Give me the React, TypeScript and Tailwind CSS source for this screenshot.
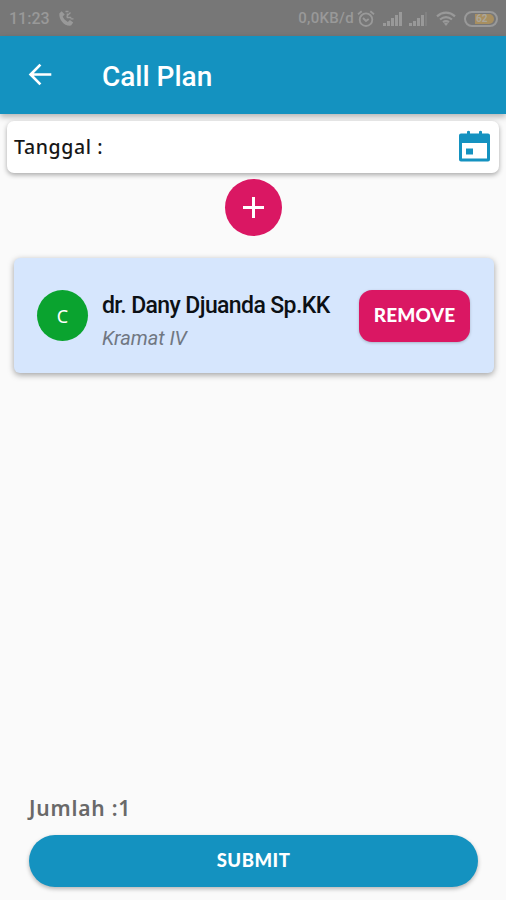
function StatusBar() {
  return (
    <div className="flex h-9 items-center bg-[#777777] pl-[9px] pr-[8px] pt-[1px] font-['Roboto',sans-serif] text-[#999999]">
      <span className="w-[41px] whitespace-nowrap text-[16px] font-medium">11:23</span>
      <svg className="ml-[8px] h-[18px] w-[17px]" viewBox="0 0 17 18" fill="none" stroke="currentColor">
        <path d="M1.3 3.4 3.7 1.2l3 3.2-2 2.2c1.1 2.4 2.8 4.2 5.1 5.3l2.1-2 3.3 2.7-2.1 3C6.3 16.5.9 9.6 1.3 3.4Z" fill="currentColor" stroke="none" />
        <path d="m12.5 2.5-4 4M9.3 3.5v4h4M7.5 1.5h3M12.5 8.8h3" strokeWidth="1.3" />
      </svg>
      <span className="ml-auto whitespace-nowrap text-[15px] font-medium tracking-[0.3px]">0,0KB/d</span>
      <svg className="ml-[3px] h-[18px] w-[18px]" viewBox="0 0 18 18" fill="none" stroke="currentColor" strokeWidth="1.8">
        <circle cx="9" cy="9.7" r="6.3" />
        <path d="m1 4.3 3.7-3M17 4.3l-3.7-3M6 8l3 3 2.7-2" />
      </svg>
      <svg className="ml-[8px] h-[18px] w-[20px]" viewBox="0 0 20 18" fill="currentColor">
        <path d="M0 13h3v3H0zM4 11h3v5H4zM8 8h3v8H8zM12 5h3v11h-3zM16 2h3v14h-3z" />
      </svg>
      <svg className="ml-[6px] h-[18px] w-[20px]" viewBox="0 0 20 18" fill="currentColor">
        <path d="M0 13h3v3H0zM4 11h3v5H4zM8 8h3v8H8zM12 5h3v11h-3z" />
        <path d="M16 2h2v14h-2z" opacity=".3" />
      </svg>
      <svg className="ml-[7px] h-[16px] w-[20px]" viewBox="0 0 20 16" fill="none" stroke="currentColor" strokeWidth="2.2">
        <path d="M1 5.3c5.5-4.8 12.5-4.8 18 0M4 8.5c4-3.3 8-3.3 12 0M7 11.2c2-1.5 4-1.5 6 0" />
        <path d="m8 12.5 2 2.5 2-2.5c-1.2-1-2.8-1-4 0Z" fill="currentColor" stroke="none" />
      </svg>
      <div className="ml-[8px] flex h-[16px] w-[34px] items-center rounded-full border-[2px] border-[#999999] pl-[9px] pr-[2px]">
        <div className="flex h-[10px] w-full items-center rounded-r-full bg-[#a88f60] pl-[1px] text-[10px] leading-none font-bold text-[#aaa69b]">62</div>
      </div>
    </div>
  );
}

function Header() {
  return (
    <header className="flex h-[78px] items-center bg-[#1492c0] pl-[28px] text-white shadow-[0_3px_6px_rgba(0,0,0,0.28)]">
      <svg className="h-[24px] w-[24px]" viewBox="0 0 24 24" fill="none" stroke="currentColor" strokeWidth="2.7">
        <path d="M12.4 1.6 2.6 11.5l9.8 9.9M2.5 11.5h20.8" />
      </svg>
      <h1 className="ml-[50px] mt-[4px] whitespace-nowrap font-['Roboto',sans-serif] text-[28px] leading-[34px] font-medium">
        Call Plan
      </h1>
    </header>
  );
}

function DateField() {
  return (
    <div className="mx-[7px] mt-[7px] flex h-[52px] items-center justify-between rounded-[7px] bg-white pl-[7px] pr-[9px] shadow-[0_2px_5px_rgba(0,0,0,0.33)]">
      <span className="whitespace-nowrap font-['Noto_Sans',sans-serif] text-[19.5px] font-medium tracking-[0.6px] text-[#171717]">Tanggal :</span>
      <svg className="mt-[-3px] h-[32px] w-[31px] text-[#1492c0]" viewBox="0 0 31 32">
        <path fill="currentColor" fillRule="evenodd" d="M2 3.5h6v-2q1.5-1.6 3 0v2h9v-2q1.5-1.6 3 0v2h6a2 2 0 0 1 2 2v24a2 2 0 0 1-2 2H2a2 2 0 0 1-2-2v-24a2 2 0 0 1 2-2Zm1 9.5v15.5h25V13Z" />
        <path fill="currentColor" d="M7 18.5h7v6H7z" />
      </svg>
    </div>
  );
}

function PlanCard() {
  return (
    <article className="ml-[14px] mt-[22px] flex h-[115px] w-[480px] items-center rounded-[6px] bg-[#d6e6fd] pl-[23px] pr-[24px] shadow-[0_2px_6px_rgba(0,0,0,0.36)]">
      <div className="flex h-[51px] w-[51px] shrink-0 items-center justify-center rounded-full bg-[#0aa32f] pt-[1px] font-['Noto_Sans',sans-serif] text-[18px] text-white">C</div>
      <div className="ml-[14px] mt-[13px]">
        <h2 className="whitespace-nowrap font-['Roboto',sans-serif] text-[23px] leading-[28px] font-medium tracking-[-0.61px] text-[#0c1014]">dr. Dany Djuanda Sp.KK</h2>
        <p className="mt-[4px] whitespace-nowrap font-['Roboto',sans-serif] text-[20px] leading-[28px] tracking-[-0.05px] italic text-[#707782]">Kramat IV</p>
      </div>
      <button className="ml-auto h-[52px] w-[111px] shrink-0 rounded-[13px] bg-[#da1763] font-['Lato',sans-serif] text-[19px] font-black tracking-[0.15px] text-white shadow-[0_1px_3px_rgba(0,0,0,0.22)]">REMOVE</button>
    </article>
  );
}

export default function App() {
  return (
    <div className="flex h-[900px] w-[506px] flex-col overflow-hidden bg-[#fafafa]">
      <StatusBar />
      <Header />
      <DateField />
      <button aria-label="Add" className="mx-auto mt-[6px] flex h-[57px] w-[57px] shrink-0 items-center justify-center rounded-full bg-[#da1763] text-white">
        <svg className="h-[21px] w-[21px]" viewBox="0 0 21 21" stroke="currentColor" strokeWidth="3">
          <path d="M10.5 0v21M0 10.5h21" />
        </svg>
      </button>
      <PlanCard />
      <footer className="mt-auto pl-[29px] pr-[28px] pb-[13px]">
        <div className="whitespace-nowrap font-['Noto_Sans',sans-serif] text-[21px] leading-[28px] font-semibold tracking-[0.8px] text-[#696969]">Jumlah :1</div>
        <button className="mt-[13px] flex h-[52px] w-full items-center justify-center rounded-full bg-[#1492c0] font-['Lato',sans-serif] text-[18.5px] font-black tracking-[0.5px] text-white shadow-[0_2px_4px_rgba(0,0,0,0.28)]">SUBMIT</button>
      </footer>
    </div>
  );
}
